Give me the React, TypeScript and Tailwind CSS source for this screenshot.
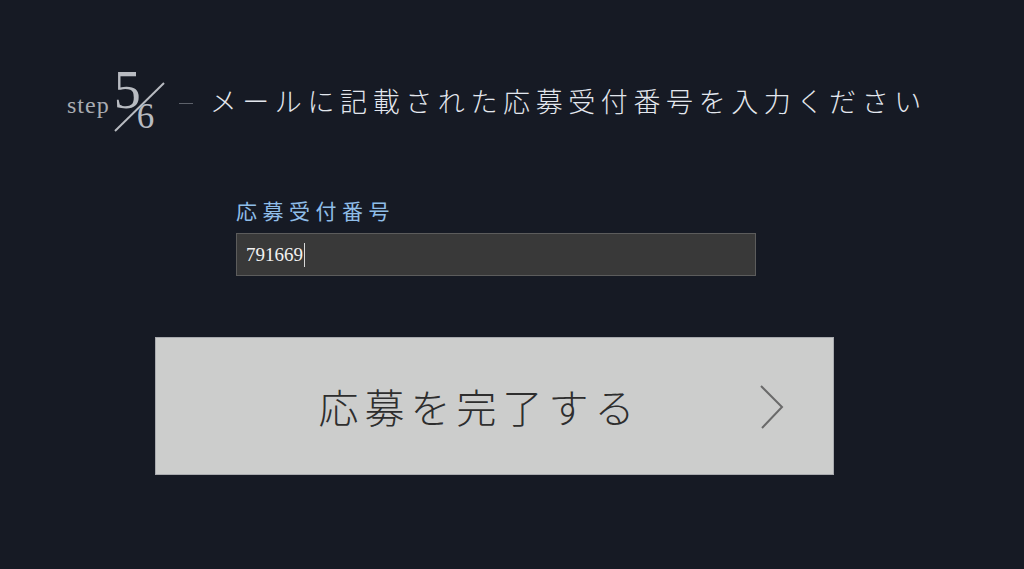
import React from "react";

const serif = "font-['Liberation_Serif','Noto_Sans_CJK_JP',serif]";
const jp = "font-['Noto_Sans_CJK_JP',sans-serif]";

export default function App() {
  return (
    <div className="min-h-[569px] w-full bg-[#161a24] text-white">
      {/* Step heading */}
      <div className="flex items-start pl-[67px] pt-[70px]">
        <span className={`${serif} mt-[23px] text-[24px] leading-none tracking-[1px] text-[#a9acb2]`}>step</span>
        <div className="relative ml-[4px] h-[62px] w-[52px]">
          <span className={`${serif} absolute left-0 top-[5px] text-[54px] leading-[30px] tracking-[-6px] text-[#b8bbc1]`}>5</span>
          <svg className="absolute left-0 top-0" width="52" height="62" viewBox="0 0 52 62">
            <line x1="1" y1="61" x2="50" y2="13" stroke="#b8bbc1" strokeWidth="2" />
          </svg>
          <span className={`${serif} absolute left-[23px] top-[36px] text-[35px] leading-[22px] text-[#b8bbc1]`}>6</span>
        </div>
        <span className="ml-[13px] mt-[33px] h-px w-[14px] bg-[#5d616a]" />
        <h1 className={`${jp} ml-[17px] mt-[17px] text-[27px] font-light leading-none tracking-[5.6px] text-[#e3e7ee]`}>
          メールに記載された応募受付番号を入力ください
        </h1>
      </div>

      <div className="ml-[155px] mt-[68px] w-[679px]">
        {/* Field */}
        <div className="ml-[81px] w-[520px]">
          <label className={`${jp} block text-[21px] leading-none tracking-[5.5px] text-[#8fbde8]`}>応募受付番号</label>
          <div className="mt-[12px] flex h-[43px] items-center border border-[#5c5c5c] bg-[#393939] pl-[9px]">
            <span className={`${serif} text-[19px] leading-none text-[#f2f2f2]`}>791669</span>
            <span className="ml-px h-[24px] w-px bg-[#d8d8d8]" />
          </div>
        </div>

        {/* Submit */}
        <button className="relative mt-[61px] flex h-[138px] w-full items-center justify-center border border-[#a8aaae] bg-[#cccdcc]">
          <span className={`${jp} ml-[-30px] text-[40px] font-light tracking-[6px] text-[#2e2e2e]`}>応募を完了する</span>
          <svg className="absolute right-[48px] top-[46px]" width="26" height="46" viewBox="0 0 26 46">
            <polyline points="2,2 23,23 3,44" fill="none" stroke="#6a6a6a" strokeWidth="2" />
          </svg>
        </button>
      </div>
    </div>
  );
}
